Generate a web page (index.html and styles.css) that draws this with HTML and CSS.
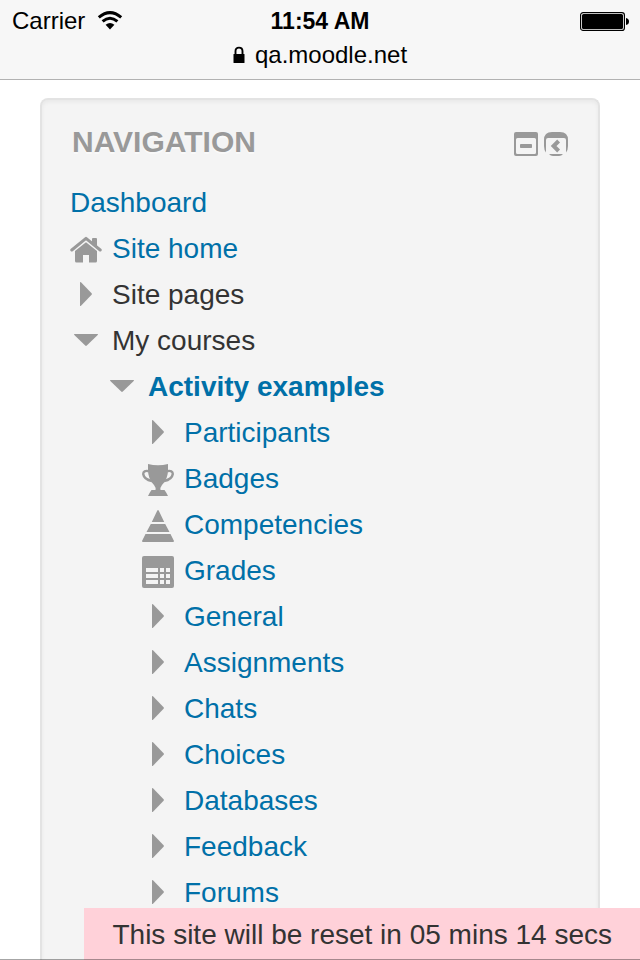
FILE: index.html
```
<!DOCTYPE html>
<html lang="en">
<head>
    <meta charset="UTF-8">
    <meta name="viewport" content="width=device-width, initial-scale=1.0">
    <title>qa.moodle.net</title>
    <link rel="stylesheet" href="styles.css">
</head>
<body>
    <svg class="symbols" aria-hidden="true">
        <symbol id="right" viewBox="0 0 32 34"><path d="M10 4.5Q10 3.5 11 4.3L21.6 15.2Q22.3 16 21.6 16.8L11 27.7Q10 28.5 10 27.5Z"/></symbol>
        <symbol id="down" viewBox="0 0 32 34"><path d="M4.5 10H27.5Q28.5 10 27.7 11L16.8 21.6Q16 22.3 15.2 21.6L4.3 11Q3.5 10 4.5 10Z"/></symbol>
    </svg>

    <header class="browser-bar">
        <div class="status">
            <div class="carrier">
                <span>Carrier</span>
                <svg width="26" height="20" viewBox="0 0 26 20" aria-hidden="true">
                    <path d="M1.8 6.4Q13-3.2 24.2 6.4" fill="none" stroke="#000" stroke-width="3"/>
                    <path d="M5.6 10.4Q13 4 20.4 10.4" fill="none" stroke="#000" stroke-width="3"/>
                    <path d="M8.6 13.8Q13 10 17.4 13.8L13 18.4Z"/>
                </svg>
            </div>
            <div class="clock">11:54 AM</div>
            <div class="battery">
                <svg width="50" height="20" viewBox="0 0 50 20" role="img" aria-label="Battery full">
                    <rect x="0.6" y="1.6" width="43.8" height="17.8" rx="2.5" fill="#fff" stroke="#000" stroke-width="1.2"/>
                    <rect x="2" y="3" width="41" height="15" rx="1.5"/>
                    <path d="M46 7Q49 7.5 49 10.5Q49 13.5 46 14Z"/>
                </svg>
            </div>
        </div>
        <div class="address">
            <svg width="12" height="18" viewBox="0 0 12 18" aria-hidden="true">
                <path d="M2.5 9V5.2Q2.5 1.6 6 1.6T9.5 5.2V9" fill="none" stroke="#000" stroke-width="1.9"/>
                <rect x="0.5" y="8" width="11" height="9" rx="0.5"/>
            </svg>
            <span>qa.moodle.net</span>
        </div>
    </header>

    <main class="block">
        <div class="block-header">
            <h2>NAVIGATION</h2>
            <div class="block-actions">
                <button type="button" aria-label="Hide Navigation block">
                    <svg width="24" height="24" viewBox="0 0 24 24">
                        <path fill-rule="evenodd" d="M2 0H22Q24 0 24 2V22Q24 24 22 24H2Q0 24 0 22V2Q0 0 2 0ZM3.5 6Q2 6 2 7.5V20.5Q2 22 3.5 22H20.5Q22 22 22 20.5V7.5Q22 6 20.5 6Z"/>
                        <rect x="6" y="12" width="12" height="4" rx="0.8"/>
                    </svg>
                </button>
                <button type="button" aria-label="Dock Navigation block">
                    <svg width="24" height="24" viewBox="0 0 24 24">
                        <path d="M2 20.5Q0 18 0 14V8Q0 0 8 0H16Q24 0 24 8V14Q24 18 22 20.5V8Q22 6 20 6H4Q2 6 2 8Z"/>
                        <path d="M5 22H19Q17.5 24 15 24H9Q6.5 24 5 22Z"/>
                        <path d="M14.6 9L9.6 14L14.6 19" fill="none" stroke="#999" stroke-width="4"/>
                    </svg>
                </button>
            </div>
        </div>

        <nav aria-label="Navigation">
            <ul class="tree">
                <li>
                    <div class="item"><a href="#">Dashboard</a></div>
                </li>
                <li>
                    <div class="item">
                        <svg class="icon" viewBox="0 0 32 34" aria-hidden="true">
                            <path d="M1.8 18L16 6.4L30.2 18" fill="none" stroke="#999" stroke-width="3" stroke-linecap="round" stroke-linejoin="round"/>
                            <path d="M22 7Q22 6 23 6H26Q27 6 27 7V16L22 12Z"/>
                            <path d="M16 10.2L27 19V29Q27 30.5 25.5 30.5H19V23H13V30.5H6.5Q5 30.5 5 29V19Z"/>
                        </svg>
                        <a href="#">Site home</a>
                    </div>
                </li>
                <li>
                    <div class="item"><button type="button" aria-label="Expand Site pages" aria-expanded="false"><svg class="icon"><use href="#right"/></svg></button><span>Site pages</span></div>
                </li>
                <li>
                    <div class="item"><button type="button" aria-label="Collapse My courses" aria-expanded="true"><svg class="icon"><use href="#down"/></svg></button><span>My courses</span></div>
                    <ul>
                        <li>
                            <div class="item"><button type="button" aria-label="Collapse Activity examples" aria-expanded="true"><svg class="icon"><use href="#down"/></svg></button><a class="current" href="#">Activity examples</a></div>
                            <ul>
                                <li class="item"><button type="button" aria-label="Expand Participants" aria-expanded="false"><svg class="icon"><use href="#right"/></svg></button><a href="#">Participants</a></li>
                                <li class="item">
                                    <svg class="icon" viewBox="0 0 32 34" aria-hidden="true">
                                        <path d="M6 2Q16 4.5 26 2V8Q26 17 20 23Q18 25.5 18.5 28H22.5Q24 30 26 34H6Q8 30 9.5 28H13.5Q14 25.5 12 23Q6 17 6 8Z"/>
                                        <path d="M7 9.2Q1.2 8 1.2 12Q2 17.5 10 19M25 9.2Q30.8 8 30.8 12Q30 17.5 22 19" fill="none" stroke="#999" stroke-width="2.4"/>
                                    </svg>
                                    <a href="#">Badges</a>
                                </li>
                                <li class="item">
                                    <svg class="icon" viewBox="0 0 32 34" aria-hidden="true">
                                        <path d="M15.3 2.5Q16 1.5 16.7 2.5L22.2 14H9.8ZM8.8 16H23.2L27.5 24H4.5ZM3.5 26H28.5L32 33Q32 34 31 34H1Q0 34 0 33Z"/>
                                    </svg>
                                    <a href="#">Competencies</a>
                                </li>
                                <li class="item">
                                    <svg class="icon" viewBox="0 0 32 34" aria-hidden="true">
                                        <rect y="2" width="32" height="32" rx="2"/>
                                        <path fill="#f4f4f4" d="M4 14H16V18H4ZM18 14H22V18H18ZM24 14H28V18H24ZM4 20H16V24H4ZM18 20H22V24H18ZM24 20H28V24H24ZM4 26H16V30H4ZM18 26H22V30H18ZM24 26H28V30H24Z"/>
                                    </svg>
                                    <a href="#">Grades</a>
                                </li>
                                <li class="item"><button type="button" aria-label="Expand General" aria-expanded="false"><svg class="icon"><use href="#right"/></svg></button><a href="#">General</a></li>
                                <li class="item"><button type="button" aria-label="Expand Assignments" aria-expanded="false"><svg class="icon"><use href="#right"/></svg></button><a href="#">Assignments</a></li>
                                <li class="item"><button type="button" aria-label="Expand Chats" aria-expanded="false"><svg class="icon"><use href="#right"/></svg></button><a href="#">Chats</a></li>
                                <li class="item"><button type="button" aria-label="Expand Choices" aria-expanded="false"><svg class="icon"><use href="#right"/></svg></button><a href="#">Choices</a></li>
                                <li class="item"><button type="button" aria-label="Expand Databases" aria-expanded="false"><svg class="icon"><use href="#right"/></svg></button><a href="#">Databases</a></li>
                                <li class="item"><button type="button" aria-label="Expand Feedback" aria-expanded="false"><svg class="icon"><use href="#right"/></svg></button><a href="#">Feedback</a></li>
                                <li class="item"><button type="button" aria-label="Expand Forums" aria-expanded="false"><svg class="icon"><use href="#right"/></svg></button><a href="#">Forums</a></li>
                            </ul>
                        </li>
                    </ul>
                </li>
            </ul>
        </nav>
    </main>

    <div class="reset-notice" role="status">This site will be reset in 05 mins 14 secs</div>
</body>
</html>
```
FILE: styles.css
```
* {
    box-sizing: border-box;
}
body {
    display: flex;
    flex-direction: column;
    min-height: 100vh;
    margin: 0;
    background: #fff;
    color: #333;
    font-family: "Liberation Sans", Arial, sans-serif;
    font-size: 28px;
}
h2, ul {
    margin: 0;
    padding: 0;
}
ul {
    list-style: none;
}
a {
    color: #0070a8;
    text-decoration: none;
}
button {
    display: flex;
    margin: 0;
    padding: 0;
    border: 0;
    background: none;
    cursor: pointer;
}
svg {
    display: block;
}
.symbols {
    position: absolute;
    width: 0;
    height: 0;
}

/* browser chrome */
.browser-bar {
    padding: 4px 12px 7px;
    background: #f7f7f7;
    border-bottom: 1px solid #b2b2b2;
    color: #000;
    font-size: 24px;
    line-height: 34px;
}
.status {
    display: grid;
    grid-template-columns: 1fr auto 1fr;
    align-items: center;
}
.carrier {
    display: flex;
    align-items: center;
    gap: 12px;
}
.clock {
    font-size: 23px;
    font-weight: bold;
}
.battery {
    display: flex;
    justify-content: flex-end;
    margin-right: -2px;
}
.address {
    display: flex;
    justify-content: center;
    align-items: center;
    gap: 10px;
}

/* navigation block */
.block {
    flex: 1;
    margin: 18px 40px 0;
    padding: 20px 28px 0;
    background: #f4f4f4;
    border: 2px solid #e3e3e3;
    border-bottom: 0;
    border-radius: 8px 8px 0 0;
    box-shadow: inset 0 2px 4px rgba(0, 0, 0, 0.05);
}
.block-header {
    display: flex;
    justify-content: space-between;
    align-items: center;
    height: 48px;
    margin-bottom: 12px;
    padding: 0 2px;
}
.block-header h2 {
    padding-bottom: 4px;
    color: #999;
    font-size: 30px;
    line-height: 44px;
    text-shadow: 0 2px 0 rgba(255, 255, 255, 0.5);
}
.block-actions {
    display: flex;
    gap: 6px;
}
.block-actions svg,
.icon {
    fill: #999;
}
.tree ul {
    padding-left: 36px;
}
.item {
    display: flex;
    align-items: center;
    gap: 10px;
    line-height: 46px;
}
.icon {
    width: 32px;
    height: 34px;
}
.current {
    font-weight: bold;
}

.reset-notice {
    position: fixed;
    right: 0;
    bottom: 0;
    padding: 5px 28px 3px;
    background: #ffd1d9;
    line-height: 44px;
}
body::after {
    content: "";
    position: fixed;
    right: 0;
    bottom: 0;
    left: 0;
    height: 1px;
    background: rgba(0, 0, 0, 0.35);
}
```
